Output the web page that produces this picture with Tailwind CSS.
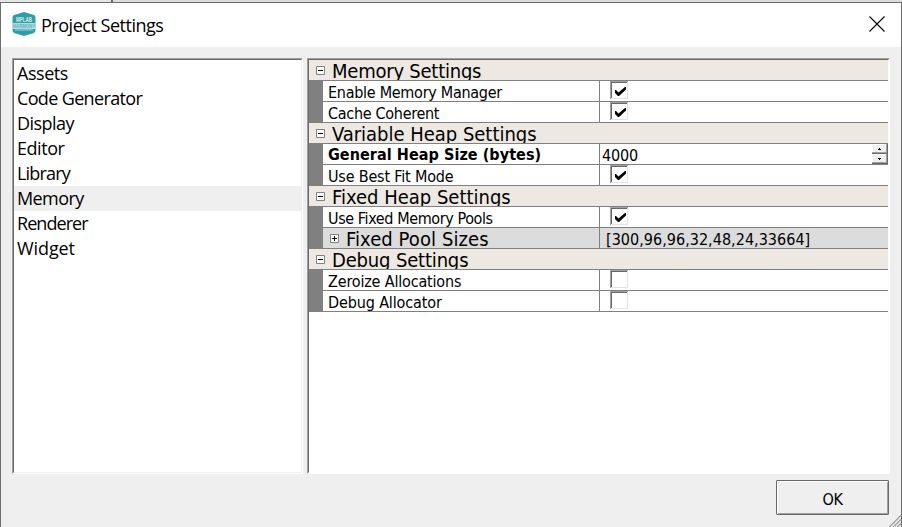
<!DOCTYPE html>
<html lang="en">
<head>
<meta charset="utf-8">
<title>Project Settings</title>
<script src="https://cdn.jsdelivr.net/npm/@tailwindcss/browser@4"></script>
</head>
<body class="w-[902px] h-[527px] overflow-hidden bg-[#dcdcdc] text-black flex flex-col">
<svg width="0" height="0" class="absolute">
  <defs>
    <symbol id="empty" viewBox="0 0 18 18"><path d="M0 0H18V1H1V18H0z" fill="#a0a0a0"/><path d="M1 1H17V2H2V17H1z" fill="#696969"/><path d="M17 1h1v17H1v-1h16z" fill="#e3e3e3"/></symbol>
    <symbol id="check" viewBox="0 0 18 18"><use href="#empty" width="18" height="18"/><path d="M5 9v3l3 3h1l7-6.500V6h-1L8.500 11.500L6 9z" fill="#000"/></symbol>
    <symbol id="minus" viewBox="0 0 9 9"><path d="M.5.5h8v8h-8z" fill="#fff" stroke="#808080"/><path d="M2 4h5v1H2z"/></symbol>
    <symbol id="plus" viewBox="0 0 9 9"><path d="M.5.5h8v8h-8z" fill="#fff" stroke="#808080"/><path d="M2 4h5v1H2zM4 2h1v5H4z"/></symbol>
  </defs>
</svg>
<div class="h-[2px] shrink-0 flex"><div class="w-[111px] bg-[#e6e6e6]"></div><div class="w-[2px] bg-[#6d6d6d]"></div></div>
<main class="flex-1 min-h-0 flex flex-col border-t border-x border-[#6d6d6d] bg-[#efefef]">
  <header class="h-[44px] shrink-0 bg-white flex items-center pl-[11px] pr-[16px]">
    <svg width="24" height="24" viewBox="0 0 24 24" class="relative -top-px">
      <path d="M12 0L22 3Q23.500 3.500 23.500 6V18Q23.500 20 22 21L12 24L2 21Q.5 20 .5 18V6Q.5 3.500 2 3z" fill="#2d9da7"/>
      <path d="M0 11h24v6H0z" fill="#b4dbde"/>
      <text x="4" y="10" font-family="Liberation Sans" font-size="6.500" font-weight="bold" fill="#d7eef0" textLength="16" lengthAdjust="spacingAndGlyphs">MPLAB</text>
      <text x="1" y="16" font-family="Liberation Sans" font-size="5" font-weight="bold" fill="#5fb3bb" textLength="22" lengthAdjust="spacingAndGlyphs">HARMONY</text>
      <path d="M3 18h18" stroke="#a5d4d8"/>
    </svg>
    <h1 class="ml-[5px] font-['Open_Sans',sans-serif] text-[18px] leading-[24px] tracking-[-0.48px] flex-1">Project Settings</h1>
    <svg width="16" height="16" viewBox="0 0 16 16" class="relative -top-px"><path d="M.5.5l15 15M15.500.5l-15 15" stroke="#000" stroke-width="1.100"/></svg>
  </header>
  <section class="h-[427px] shrink-0 flex gap-[4px] pt-[11px] pl-[11px] pr-[11px]">
    <div class="w-[291px] shrink-0 h-[416px] border-t border-l border-[#a0a0a0] border-r border-b border-r-white border-b-white">
      <ul class="h-full bg-white border border-t-[#696969] border-l-[#696969] border-r-[#efefef] border-b-[#efefef] pt-[1px] font-['Open_Sans',sans-serif] text-[18px] leading-[25px] *:h-[25px] *:pl-[3px]">
        <li class="tracking-[-0.45px]">Assets</li><li class="tracking-[-0.65px]">Code Generator</li><li class="tracking-[-0.55px]">Display</li><li class="tracking-[-0.45px]">Editor</li><li class="tracking-[-0.8px]">Library</li><li class="bg-[#efefef] tracking-[-0.6px]">Memory</li><li class="tracking-[-0.95px]">Renderer</li><li class="tracking-[-0.1px]">Widget</li>
      </ul>
    </div>
    <div class="w-[583px] shrink-0 h-[416px] border-t border-l border-[#a0a0a0] border-r border-b border-r-white border-b-white">
      <div class="h-full bg-white border border-t-[#696969] border-l-[#696969] border-r-white border-b-white font-['DejaVu_Sans_Condensed','DejaVu_Sans',sans-serif] font-stretch-condensed text-[16px] leading-[20px] tracking-[-0.4px] whitespace-nowrap">
        <div class="h-[21px] flex items-center overflow-hidden bg-[#ede8e1] border-b border-[#808080] pl-[7px]"><svg width="9" height="9"><use href="#minus"/></svg><span class="ml-[7px] text-[20px] tracking-[-0.23px] relative top-[1px]">Memory Settings</span></div>
        <div class="h-[21px] flex"><div class="w-[14px] bg-[#808080]"></div><div class="w-[277px] pl-[5px] border-b border-r border-[#808080] overflow-hidden"><span class="relative top-[2px] tracking-[-0.28px]">Enable Memory Manager</span></div><div class="flex-1 border-b border-[#808080] pl-[10px]"><svg width="18" height="18"><use href="#check"/></svg></div></div>
        <div class="h-[21px] flex"><div class="w-[14px] bg-[#808080]"></div><div class="w-[277px] pl-[5px] border-b border-r border-[#808080] overflow-hidden"><span class="relative top-[2px] tracking-[-0.3px]">Cache Coherent</span></div><div class="flex-1 border-b border-[#808080] pl-[10px]"><svg width="18" height="18"><use href="#check"/></svg></div></div>
        <div class="h-[21px] flex items-center overflow-hidden bg-[#ede8e1] border-b border-[#808080] pl-[7px]"><svg width="9" height="9"><use href="#minus"/></svg><span class="ml-[7px] text-[20px] tracking-[-0.02px] relative top-[1px]">Variable Heap Settings</span></div>
        <div class="h-[21px] flex"><div class="w-[14px] bg-[#808080]"></div><div class="w-[277px] pl-[5px] border-b border-r border-[#808080] overflow-hidden"><b class="relative top-[1px] tracking-[0.06px]">General Heap Size (bytes)</b></div><div class="flex-1 flex border-b border-[#808080] pl-[2px]"><span class="flex-1 relative top-[2px] tracking-[-0.15px]">4000</span>
          <svg width="16" height="20" viewBox="0 0 16 20"><path d="M0 0h16v20H0z" fill="#696969"/><path d="M0 0h15v9H0zM0 10h15v9H0z" fill="#a0a0a0"/><path d="M0 0h14v8H0zM0 10h14v8H0z" fill="#fff"/><path d="M1 1h13v7H1zM1 11h13v7H1z" fill="#efefef"/><path d="M7 4h1v1h1v1H6V5h1zM6 14h3v1H8v1H7v-1H6z"/></svg></div></div>
        <div class="h-[21px] flex"><div class="w-[14px] bg-[#808080]"></div><div class="w-[277px] pl-[5px] border-b border-r border-[#808080] overflow-hidden"><span class="relative top-[2px] tracking-[-0.18px]">Use Best Fit Mode</span></div><div class="flex-1 border-b border-[#808080] pl-[10px]"><svg width="18" height="18"><use href="#check"/></svg></div></div>
        <div class="h-[21px] flex items-center overflow-hidden bg-[#ede8e1] border-b border-[#808080] pl-[7px]"><svg width="9" height="9"><use href="#minus"/></svg><span class="ml-[7px] text-[20px] tracking-[0px] relative top-[1px]">Fixed Heap Settings</span></div>
        <div class="h-[21px] flex"><div class="w-[14px] bg-[#808080]"></div><div class="w-[277px] pl-[5px] border-b border-r border-[#808080] overflow-hidden"><span class="relative top-[2px]">Use Fixed Memory Pools</span></div><div class="flex-1 border-b border-[#808080] pl-[10px]"><svg width="18" height="18"><use href="#check"/></svg></div></div>
        <div class="h-[21px] flex bg-[#dcdcdc]"><div class="w-[14px] bg-[#808080]"></div><div class="w-[277px] pl-[7px] flex items-center border-b border-r border-[#808080] overflow-hidden"><svg width="9" height="9"><use href="#plus"/></svg><span class="ml-[7px] text-[20px] tracking-[0.08px] relative top-[1px]">Fixed Pool Sizes</span></div><div class="flex-1 border-b border-[#808080] pl-[6px] overflow-hidden"><span class="relative top-[2px] tracking-[0.03px]">[300,96,96,32,48,24,33664]</span></div></div>
        <div class="h-[21px] flex items-center overflow-hidden bg-[#ede8e1] border-b border-[#808080] pl-[7px]"><svg width="9" height="9"><use href="#minus"/></svg><span class="ml-[7px] text-[20px] tracking-[-0.17px] relative top-[1px]">Debug Settings</span></div>
        <div class="h-[21px] flex"><div class="w-[14px] bg-[#808080]"></div><div class="w-[277px] pl-[5px] border-b border-r border-[#808080] overflow-hidden"><span class="relative top-[2px] tracking-[-0.17px]">Zeroize Allocations</span></div><div class="flex-1 border-b border-[#808080] pl-[10px]"><svg width="18" height="18"><use href="#empty"/></svg></div></div>
        <div class="h-[21px] flex"><div class="w-[14px] bg-[#808080]"></div><div class="w-[277px] pl-[5px] border-b border-r border-[#808080] overflow-hidden"><span class="relative top-[2px] tracking-[-0.13px]">Debug Allocator</span></div><div class="flex-1 border-b border-[#808080] pl-[10px]"><svg width="18" height="18"><use href="#empty"/></svg></div></div>
      </div>
    </div>
  </section>
  <footer class="flex-1 relative flex justify-end items-start pt-[6px] pr-[12px]">
    <button class="w-[113px] h-[35px] border border-[#696969] rounded-[1px] bg-[#efefef] shadow-[inset_1px_1px_0_#fff,inset_-1px_-1px_0_#a0a0a0] font-['DejaVu_Sans_Condensed','DejaVu_Sans',sans-serif] font-stretch-condensed text-[16px] tracking-[-0.3px] pt-[4px]">OK</button>
    <svg class="absolute right-0 bottom-0" width="12" height="12" viewBox="0 0 12 12"><path d="M0 12L12 0M4 12L12 4M8 12L12 8" stroke="#a0a0a0" stroke-width="1.800"/><path d="M-1 12L12-1M3 12L12 3M7 12L12 7" stroke="#fff" stroke-width=".7"/></svg>
  </footer>
</main>
</body>
</html>
